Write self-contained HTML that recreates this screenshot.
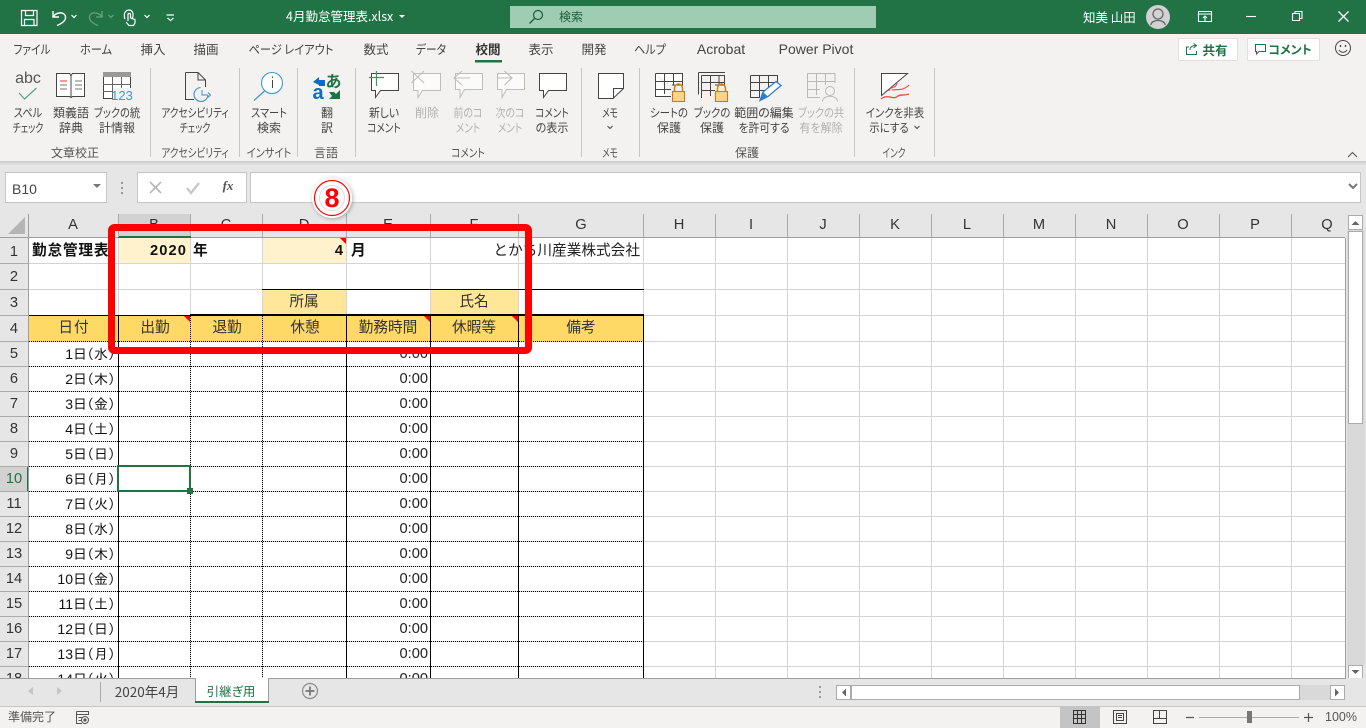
<!DOCTYPE html>
<html lang="ja"><head><meta charset="utf-8"><title>4月勤怠管理表.xlsx</title>
<style>
html,body{margin:0;padding:0;width:1366px;height:728px;overflow:hidden;background:#fff}
body{position:relative;font-family:"Liberation Sans","Noto Sans CJK JP",sans-serif}
svg.l{position:absolute;left:0;top:0}
.t,.c,.r{position:absolute;white-space:nowrap;line-height:16px;font-size:12px;color:#444;font-family:"Noto Sans CJK JP",sans-serif;font-feature-settings:"palt"}
.c{transform:translateX(-50%) scaleX(var(--s,1))}
.d{color:#b1b1b1}
.tab{font-size:12.5px;top:41px}
.g{font-size:12px;top:145px;color:#555}
.ch{font-family:"Liberation Sans",sans-serif;font-size:14.67px;top:217px;color:#333;font-feature-settings:normal}
.rh{font-family:"Liberation Sans",sans-serif;font-size:14.67px;left:14px;color:#333;font-feature-settings:normal}
.cell{font-size:14.67px;color:#111;font-feature-settings:normal;font-family:"Liberation Sans","Noto Sans CJK JP",sans-serif}
.r{transform:translateX(-100%)}
.dt{font-family:"Liberation Sans","IPAGothic",sans-serif;font-size:14px;color:#111;left:115px;font-feature-settings:normal}
.dt i{font-style:normal;font-family:"IPAGothic",sans-serif}
.tm{font-family:"Liberation Sans",sans-serif;font-size:14.67px;color:#222;left:428px;font-feature-settings:normal}
</style></head><body>
<svg class="l" width="1366" height="728" viewBox="0 0 1366 728" fill="none">
<!-- backgrounds -->
<rect width="1366" height="34" fill="#217346"/>
<rect x="510" y="6" width="366" height="22" fill="#9fcdb3"/>
<rect y="34" width="1366" height="127" fill="#f3f2f1"/>
<rect y="161" width="1366" height="53" fill="#e6e6e6"/>
<rect y="161" width="1366" height="2" fill="#cfcfcf"/><rect y="163" width="1366" height="2" fill="#dedede"/>
<rect y="214" width="1346" height="24" fill="#e6e6e6"/>
<rect y="238" width="29" height="441" fill="#e6e6e6"/>
<rect x="1346" y="214" width="20" height="465" fill="#e6e6e6"/>
<!-- formula bar -->
<rect x="5.500" y="172.500" width="101" height="30" fill="#fff" stroke="#c6c6c6"/>
<rect x="137.500" y="172.500" width="109" height="30" fill="#fff" stroke="#c6c6c6"/>
<rect x="250.500" y="172.500" width="1110" height="30" fill="#fff" stroke="#c6c6c6"/>
<path d="M93 184h8l-4 4z" fill="#777"/>
<path d="M122 182v2M122 187v2M122 192v2" stroke="#999" stroke-width="2"/>
<path d="M150 182l11 11M161 182l-11 11" stroke="#b8b8b8" stroke-width="1.600"/>
<path d="M187 188l4 5 8-10" stroke="#c8c8c8" stroke-width="2.400"/>
<path d="M1349 184l4 4 4-4" stroke="#777" stroke-width="2"/>
<path d="M8 234L25 217V234z" fill="#b4b4b4"/>
<!-- grid fills -->
<rect x="119" y="214" width="72" height="22" fill="#d2d2d2"/>
<rect x="118" y="236" width="73" height="2" fill="#217346"/>
<rect y="466" width="27" height="25" fill="#d2d2d2"/>
<rect x="27" y="466" width="2" height="25" fill="#217346"/>
<rect x="119" y="238" width="71" height="25" fill="#fff2cc"/>
<rect x="263" y="238" width="83" height="25" fill="#fff2cc"/>
<rect x="263" y="290" width="83" height="25" fill="#ffe699"/>
<rect x="431" y="290" width="87" height="25" fill="#ffe699"/>
<rect x="29" y="316" width="614" height="25" fill="#ffd966"/>
<!-- light grid -->
<path stroke="#d4d4d4" d="M118.500 238V678M190.500 238V678M262.500 238V678M346.500 238V678M430.500 238V678M518.500 238V678M643.500 238V678M715.500 238V678M787.500 238V678M859.500 238V678M931.500 238V678M1003.500 238V678M1075.500 238V678M1147.500 238V678M1219.500 238V678M1291.500 238V678
M29 263.500H1345M29 289.500H1345M29 315.500H1345M29 341.500H1345M29 366.500H1345M29 391.500H1345M29 416.500H1345M29 441.500H1345M29 466.500H1345M29 491.500H1345M29 516.500H1345M29 541.500H1345M29 566.500H1345M29 591.500H1345M29 616.500H1345M29 641.500H1345M29 666.500H1345"/>
<!-- header separators -->
<path stroke="#ababab" d="M118.500 214V237M190.500 214V236M262.500 214V237M346.500 214V237M430.500 214V237M518.500 214V237M643.500 214V237M715.500 214V237M787.500 214V237M859.500 214V237M931.500 214V237M1003.500 214V237M1075.500 214V237M1147.500 214V237M1219.500 214V237M1291.500 214V237
M0 263.500H28M0 289.500H28M0 315.500H28M0 341.500H28M0 366.500H28M0 391.500H28M0 416.500H28M0 441.500H28M0 466.500H28M0 491.500H28M0 516.500H28M0 541.500H28M0 566.500H28M0 591.500H28M0 616.500H28M0 641.500H28M0 666.500H28"/>
<path stroke="#9e9e9e" d="M28.500 214V678M0 237.500H118M191 237.500H1345M1345.500 238V678"/>
<!-- black borders -->
<path stroke="#000" d="M262 289.500H644M190 314.500H644M29 315.500H644M118.500 315V679M346.500 315V679M430.500 315V679M518.500 315V679M643.500 315V679"/>
<path stroke="#000" stroke-dasharray="1 1" d="M29 341.500H644M29 366.500H644M29 391.500H644M29 416.500H644M29 441.500H644M29 466.500H644M29 491.500H644M29 516.500H644M29 541.500H644M29 566.500H644M29 591.500H644M29 616.500H644M29 641.500H644M29 666.500H644M190.500 316V679M262.500 316V679"/>
<!-- comment marks -->
<path d="M184 316h6v6zM340 238h6v6zM424 316h6v6zM512 316h6v6z" fill="#f00"/>
<!-- selection -->
<rect x="118" y="466" width="72" height="25" stroke="#217346" stroke-width="2"/>
<rect x="187" y="488" width="6" height="6" fill="#217346"/>

<!-- title bar icons -->
<g stroke="#fff" stroke-width="1.200">
<path d="M21.500 10.500H37V25.500H21.500ZM25.500 10.500V15.500H33.500V10.500M24.500 25.500V19.500H34V25.500"/>
<path d="M53 11V17H59M53 17C56 12 65 11 65.500 17C66 21 61 24 57 25.500" stroke-width="1.400"/>
<path d="M125 19C122.500 12 127 10 129 10C132 10 134 13 132.500 18M128 21V14.500C128 13 130.500 13 130.500 14.500V18L135 19.500V23L133.500 25.500H129L126 22" stroke-width="1.200"/>
<path d="M166.500 15H174M167.500 18L170.500 20.500L173.500 18"/>
<path d="M71.500 15l2.500 2.500l2.500-2.500M144.500 15l2.500 2.500l2.500-2.500"/>
</g>
<g stroke="#6a9f82" stroke-width="1.300"><path d="M102 11V17H96M102 17C99 12 90 11 89.500 17C89 21 94 24 98 25.500"/><path d="M108.500 15l2.500 2.500l2.500-2.500"/></g>
<path d="M399 15h6l-3 3z" fill="#fff"/>
<circle cx="538" cy="15" r="4.500" stroke="#1e5c3a" stroke-width="1.200"/><path d="M534.500 18.500L529.500 23.500" stroke="#1e5c3a" stroke-width="1.300"/>
<circle cx="1158" cy="17" r="12" fill="#d2d2d2"/>
<circle cx="1158" cy="14" r="5" stroke="#666" stroke-width="1.300"/><path d="M1151 25C1151 19 1165 19 1165 25" stroke="#666" stroke-width="1.300"/>
<g stroke="#fff" stroke-width="1.100">
<path d="M1198.500 11.500H1211.500V21.500H1198.500ZM1198.500 14H1211.500M1205 21V16M1203 18L1205 16L1207 18"/>
<path d="M1246 16.500H1256"/>
<path d="M1292.500 13.500H1299.500V20.500H1292.500ZM1295 13V11.500H1302V18.500H1300"/>
<path d="M1338.500 11.500L1348.500 21.500M1348.500 11.500L1338.500 21.500" stroke-width="1.300"/>
</g>
<path d="M475 60h27v2.500h-27z" fill="#217346"/>
<!-- right buttons -->
<rect x="1178.500" y="38.500" width="59" height="22" rx="1" fill="#fff" stroke="#e1dfdd"/>
<rect x="1247.500" y="38.500" width="72" height="22" rx="1" fill="#fff" stroke="#e1dfdd"/>
<path d="M1189 47H1186.500V54.500H1196.500V51M1190 50C1190 46.500 1193 45.500 1196 45.500M1193.500 43.500L1196.500 45.500L1193.500 48" stroke="#217346" stroke-width="1"/>
<path d="M1255.500 44.500H1265.500V51.500H1259L1256.500 54V51.500H1255.500Z" stroke="#217346"/>
<circle cx="1343" cy="48" r="7.500" stroke="#444" stroke-width="1"/><path d="M1339 50C1341 53 1345 53 1347 50" stroke="#444"/><path d="M1340.500 45v2M1345.500 45v2" stroke="#444" stroke-width="1.300"/>
<path d="M1348 157l4.500-4.500 4.500 4.500" stroke="#555" stroke-width="1.100"/>
<!-- ribbon separators -->
<path stroke="#c8c6c4" d="M150.500 68V157M239.500 68V157M297.500 68V157M355.500 68V157M581.500 68V157M639.500 68V157M854.500 68V157M934.500 68V157"/>
<!-- ribbon icons -->
<path d="M19 93l5.500 6 12-11" stroke="#5aa67f" stroke-width="1.200"/>
<!-- thesaurus -->
<path d="M56.500 73.500H69.500C70 74 71 75 71 76C71 75 72 74 72.500 73.500H84.500V96.500H72.500L71 97.500L69.500 96.500H56.500ZM71 76V97" stroke="#444" fill="#fff"/>
<path d="M60 81h7" stroke="#e8323c"/><path d="M60 85h7M60 89h7M75 81h7M75 85h7M75 89h7" stroke="#777"/>
<!-- stats -->
<rect x="103.500" y="72.500" width="27" height="26" fill="#fff" stroke="#444"/><rect x="103" y="72" width="28" height="5" fill="#999"/>
<path d="M112.500 77V99M121.500 77V90M103 84.500H131M103 91.500H113" stroke="#666"/>
<rect x="113" y="88" width="19" height="12" fill="#f3f2f1"/>
<!-- accessibility -->
<path d="M185.500 72.500H198L205.500 80V87M198 72.500V80H205.500M185.500 72.500V99.500H194" stroke="#444" fill="none"/>
<path d="M200.500 87.500A7 7 0 1 0 208 95" stroke="#3a8fd6" stroke-width="1.100"/><path d="M202 90V95H208M208 92.500L210.500 95L208 97.500" stroke="#3a8fd6"/>
<!-- smart lookup -->
<circle cx="272" cy="83" r="10.500" stroke="#3a9ad9" stroke-width="1.100" fill="#fff"/><path d="M265 90.500L254 100.500" stroke="#3a9ad9" stroke-width="1.300"/><path d="M272.500 80V88" stroke="#444"/><path d="M272.500 76.500v1.500" stroke="#444"/>
<!-- translate -->
<path d="M313 82l6-5v3h6v6h-6v-1z" fill="#0f6cbd"/>
<path d="M340 90V99H329L332 96L329 92H334L336 94Z" fill="#217346"/>
<!-- comments -->
<path d="M371.500 73.500H398.500V90.500H380.500L375.500 97.500V90.500H371.500Z" fill="#fff" stroke="#444"/>
<path d="M369 77.500H384M376.500 71V86" stroke="#2da05f" stroke-width="1.200"/>
<g stroke="#bdbdbd"><path d="M413.500 73.500H440.500V90.500H422.500L418 97.500V90.500H413.500Z" fill="#fbfbfb"/><path d="M411.500 71L424 83M424 71L411.500 83" stroke-width="1.100"/>
<path d="M455.500 73.500H482.500V89.500H464.500L460 97.500V89.500H455.500Z" fill="#fbfbfb"/><path d="M462 71L454 78L462 85M454 78H470" stroke-width="1.100"/>
<path d="M497.500 73.500H524.500V89.500H506.500L502 97.500V89.500H497.500Z" fill="#fbfbfb"/><path d="M497 78H511.500M504.500 71L512 78L504.500 85" stroke-width="1.100"/></g>
<path d="M539.500 73.500H566.500V90.500H548.500L543.500 97.500V90.500H539.500Z" fill="#fff" stroke="#444"/>
<!-- memo -->
<path d="M598.500 73.500H623.500V88.500L613 98.500H598.500Z" fill="#fff" stroke="#444"/><path d="M623.500 88.500H613.500V98.500" stroke="#444"/>
<!-- protect -->
<g stroke="#444"><path d="M655.500 73.500H682.500V85H672M655.500 73.500V96.500H671M664.500 73.500V94M673.500 73.500V85M655.500 81.500H682.500M655.500 89.500H671" fill="#fff"/>
<path d="M698.500 72.500H725M701.500 75.500H724.500V85H715M701.500 75.500V98M698.500 72.500V94.500M710.500 75.500V96M719 75.500V85M701.500 82.500H724.500M701.500 90.500H715"/>
<path d="M750.500 75.500H777.500V83M750.500 75.500V97.500H760M759.500 75.500V97M768.500 75.500V92M750.500 82.500H777.500M750.500 90.500H768"/></g>
<g fill="#fbd68a" stroke="#d9730d" stroke-width="1.100"><rect x="672.500" y="91.500" width="12" height="10"/><rect x="715.500" y="91.500" width="12" height="10"/></g>
<path d="M674.500 91v-2.500a4 4.500 0 0 1 8 0V91M717.500 91v-2.500a4 4.500 0 0 1 8 0V91" stroke="#e07b00" stroke-width="1.500"/>
<path d="M760 100.500L763 92L776 81.500L781 85.500L768 96.500Z" fill="#fff" stroke="#2f7fd0" stroke-width="1.300"/><path d="M760 100.500L763 92L768 96.500Z" fill="#2f7fd0"/>
<g stroke="#b8b8b8"><path d="M807.500 73.500H835V83M807.500 73.500V97.500H820M816.500 73.500V95M825.500 73.500V85M807.500 81.500H835M807.500 89.500H820"/><circle cx="830" cy="91" r="4.500" fill="#f3f2f1"/><path d="M822.500 101.500C822.500 94.500 837.500 94.500 837.500 101.500" fill="#f3f2f1"/></g>
<!-- ink -->
<path d="M881.500 73.500H907.500L881.500 95.500Z" fill="#fff" stroke="#444"/>
<path d="M897 83C896 89 890 86 889 91M892 90C899 89 903 91 909 85" stroke="#f05050" stroke-width="1.200"/><path d="M881 99C889 93 892 101 898 96C901 94 903 96 909 94" stroke="#f05050" stroke-width="1.400"/>
<!-- small chevrons -->
<path d="M607.500 126l2.500 2.500 2.500-2.500M914.500 126l2.500 2.500 2.500-2.500" stroke="#444"/>
<!-- scrollbars -->
<rect x="1347" y="230" width="18" height="435" fill="#d9d9d9"/>
<rect x="1348.500" y="215.500" width="14" height="14" fill="#fff" stroke="#ababab"/>
<path d="M1351.500 225h8l-4-4z" fill="#666"/>
<rect x="1348.500" y="231.500" width="14" height="192" fill="#fff" stroke="#ababab"/>
<rect x="1348.500" y="665.500" width="14" height="14" fill="#fff" stroke="#ababab"/>
<path d="M1351.500 670h8l-4 4z" fill="#666"/>
<!-- tab bar -->
<rect y="678" width="1366" height="28" fill="#e6e6e6"/>
<path stroke="#9e9e9e" d="M0 678.500H195M269 678.500H1346"/>
<rect y="706" width="1366" height="22" fill="#f3f2f1"/>
<path stroke="#c6c6c6" d="M0 706.500H1366"/>
<path d="M33 687v8l-5-4zM57 687v8l5-4z" fill="#c4c4c4"/>
<path stroke="#aaa" d="M100.500 682V702"/>
<path d="M195.500 678V702M268.500 678V702" stroke="#9e9e9e"/>
<rect x="196" y="678" width="72" height="24" fill="#fff"/>
<rect x="195" y="701" width="74" height="2" fill="#217346"/>
<circle cx="310" cy="691" r="7.500" stroke="#8a8a8a" stroke-width="1.200"/><path d="M305.500 691H314.500M310 686.500V695.500" stroke="#777" stroke-width="1.800"/>
<path d="M820 686v2M820 691v2M820 696v2" stroke="#999" stroke-width="2"/>
<rect x="836" y="685" width="509" height="15" fill="#d9d9d9"/>
<rect x="836.500" y="685.500" width="14" height="14" fill="#fff" stroke="#ababab"/>
<path d="M846 688.500v8l-4-4z" fill="#666"/>
<rect x="851.500" y="685.500" width="448" height="14" fill="#fff" stroke="#ababab"/>
<rect x="1330.500" y="685.500" width="14" height="14" fill="#fff" stroke="#ababab"/>
<path d="M1335 688.500v8l4-4z" fill="#666"/>
<!-- status -->
<path d="M76.500 711.500H88.500V715M76.500 711.500V723.500H82M76.500 714.500H88.500M78.500 717.500H82M78.500 720.500H82" stroke="#555"/><circle cx="85" cy="720" r="3.500" stroke="#555"/><circle cx="85" cy="720" r="1.600" fill="#555"/>
<rect x="1060" y="707" width="40" height="21" fill="#c4c4c4"/>
<path d="M1073.500 710.500H1085.500V723.500H1073.500ZM1077.500 710.500V723.500M1081.500 710.500V723.500M1073.500 714.500H1085.500M1073.500 718.500H1085.500" stroke="#333"/>
<path d="M1113.500 710.500H1126.500V723.500H1113.500ZM1116.500 713.500H1123.500V720.500H1116.500ZM1118 715.500H1122M1118 717.500H1122" stroke="#444"/>
<path d="M1153.500 710.500H1166.500V723.500H1153.500ZM1153.500 718.500H1159.500V710.500M1159.500 718.500H1166.500" stroke="#444"/>
<path d="M1186 717.500H1194M1304 717.500H1313M1308.500 713V722" stroke="#555" stroke-width="1.200"/>
<path d="M1199 717.500H1299" stroke="#aaa"/>
<rect x="1247" y="711" width="5" height="12" fill="#777"/>
</svg>

<!-- title text -->
<div class="t" style="left:286px;top:8px;font-size:12.5px;color:#fff">4月勤怠管理表.xlsx</div>
<div class="t" style="left:559px;top:9px;color:#1e5c3a">検索</div>
<div class="t" style="left:1083px;top:9px;color:#fff;font-size:12.5px">知美 山田</div>
<!-- tabs -->
<div class="c tab" style="left:32px;--s:.86">ファイル</div>
<div class="c tab" style="left:96px;--s:.9">ホーム</div>
<div class="c tab" style="left:153px">挿入</div>
<div class="c tab" style="left:206px">描画</div>
<div class="c tab" style="left:291px;--s:.9">ページ レイアウト</div>
<div class="c tab" style="left:376px">数式</div>
<div class="c tab" style="left:431px;--s:.87">データ</div>
<div class="c tab" style="left:488px;font-weight:700;color:#333">校閲</div>
<div class="c tab" style="left:541px">表示</div>
<div class="c tab" style="left:594px">開発</div>
<div class="c tab" style="left:650px;--s:.89">ヘルプ</div>
<div class="c tab" style="left:721px;font-family:'Liberation Sans',sans-serif;font-size:14px">Acrobat</div>
<div class="c tab" style="left:816px;font-family:'Liberation Sans',sans-serif;font-size:14px">Power Pivot</div>
<div class="c" style="left:1215px;top:42px;font-weight:700;color:#217346;font-size:12.5px">共有</div>
<div class="c" style="left:1290px;top:42px;font-weight:700;color:#217346;font-size:12px">コメント</div>
<!-- ribbon icon glyphs -->
<div class="c" style="left:28px;top:71px;font-size:16px;font-family:'Liberation Sans',sans-serif;color:#555">abc</div>
<div class="c" style="left:122px;top:88px;font-size:13px;font-family:'Liberation Sans',sans-serif;color:#3a9ad9">123</div>
<div class="c" style="left:333.500px;top:72px;font-size:16px;font-weight:700;color:#217346">あ</div>
<div class="c" style="left:318px;top:85px;font-size:20px;font-weight:700;font-family:'Liberation Sans',sans-serif;color:#0f6cbd">a</div>
<!-- ribbon labels -->
<div class="c" style="left:28px;top:105px;--s:.85">スペル</div><div class="c" style="left:28px;top:120px;--s:.75">チェック</div>
<div class="c" style="left:71px;top:105px">類義語</div><div class="c" style="left:71px;top:120px">辞典</div>
<div class="c" style="left:117px;top:105px;--s:.85">ブックの統</div><div class="c" style="left:117px;top:120px">計情報</div>
<div class="c" style="left:195px;top:105px;--s:.8">アクセシビリティ</div><div class="c" style="left:195px;top:120px;--s:.75">チェック</div>
<div class="c" style="left:269px;top:105px;--s:.85">スマート</div><div class="c" style="left:269px;top:120px">検索</div>
<div class="c" style="left:327px;top:105px">翻</div><div class="c" style="left:327px;top:120px">訳</div>
<div class="c" style="left:384px;top:105px;--s:.9">新しい</div><div class="c" style="left:384px;top:120px;--s:.8">コメント</div>
<div class="c d" style="left:427px;top:105px">削除</div>
<div class="c d" style="left:468px;top:105px;--s:.83">前のコ</div><div class="c d" style="left:468px;top:120px;--s:.8">メント</div>
<div class="c d" style="left:510px;top:105px;--s:.83">次のコ</div><div class="c d" style="left:510px;top:120px;--s:.8">メント</div>
<div class="c" style="left:552px;top:105px;--s:.8">コメント</div><div class="c" style="left:552px;top:120px;--s:.92">の表示</div>
<div class="c" style="left:610px;top:105px;--s:.72">メモ</div>
<div class="c" style="left:669px;top:105px;--s:.87">シートの</div><div class="c" style="left:669px;top:120px">保護</div>
<div class="c" style="left:712px;top:105px;--s:.87">ブックの</div><div class="c" style="left:712px;top:120px">保護</div>
<div class="c" style="left:764px;top:105px">範囲の編集</div><div class="c" style="left:764px;top:120px;--s:.9">を許可する</div>
<div class="c d" style="left:821px;top:105px;--s:.85">ブックの共</div><div class="c d" style="left:821px;top:120px;--s:.92">有を解除</div>
<div class="c" style="left:895px;top:105px;--s:.87">インクを非表</div><div class="c" style="left:889px;top:120px;--s:.87">示にする</div>
<div class="c g" style="left:75px">文章校正</div>
<div class="c g" style="left:195px;--s:.8">アクセシビリティ</div>
<div class="c g" style="left:269px;--s:.85">インサイト</div>
<div class="c g" style="left:326px">言語</div>
<div class="c g" style="left:468px;--s:.8">コメント</div>
<div class="c g" style="left:610px;--s:.72">メモ</div>
<div class="c g" style="left:747px">保護</div>
<div class="c g" style="left:894px;--s:.72">インク</div>
<!-- formula bar -->
<div class="t" style="left:12px;top:181px;font-family:'Liberation Sans',sans-serif;font-size:14px;color:#444">B10</div>
<div class="c" style="left:228px;top:178px;font-family:'Liberation Serif',serif;font-style:italic;font-weight:700;font-size:13px;color:#555">fx</div>
<!-- column headers -->
<div class="c ch" style="left:73px">A</div><div class="c ch" style="left:154px">B</div><div class="c ch" style="left:226px">C</div><div class="c ch" style="left:304px">D</div><div class="c ch" style="left:388px">E</div><div class="c ch" style="left:474px">F</div><div class="c ch" style="left:581px">G</div><div class="c ch" style="left:679px">H</div><div class="c ch" style="left:751px">I</div><div class="c ch" style="left:823px">J</div><div class="c ch" style="left:895px">K</div><div class="c ch" style="left:967px">L</div><div class="c ch" style="left:1039px">M</div><div class="c ch" style="left:1111px">N</div><div class="c ch" style="left:1183px">O</div><div class="c ch" style="left:1255px">P</div><div class="c ch" style="left:1327px">Q</div>
<!-- row headers -->
<div class="c rh" style="top:244px">1</div><div class="c rh" style="top:269px">2</div><div class="c rh" style="top:295px">3</div><div class="c rh" style="top:321px">4</div><div class="c rh" style="top:346px">5</div><div class="c rh" style="top:371px">6</div><div class="c rh" style="top:396px">7</div><div class="c rh" style="top:421px">8</div><div class="c rh" style="top:446px">9</div><div class="c rh" style="top:471px;color:#217346">10</div><div class="c rh" style="top:496px">11</div><div class="c rh" style="top:521px">12</div><div class="c rh" style="top:546px">13</div><div class="c rh" style="top:571px">14</div><div class="c rh" style="top:596px">15</div><div class="c rh" style="top:621px">16</div><div class="c rh" style="top:646px">17</div>
<!-- cells -->
<div class="t cell" style="left:32px;top:243px;font-weight:700;letter-spacing:.8px">勤怠管理表</div>
<div class="r cell" style="left:187px;top:243px;font-weight:700;letter-spacing:1.100px">2020</div>
<div class="t cell" style="left:193px;top:243px;font-weight:700">年</div>
<div class="r cell" style="left:343px;top:243px;font-weight:700">4</div>
<div class="t cell" style="left:351px;top:243px;font-weight:700">月</div>
<div class="r cell" style="left:640px;top:243px;color:#222">とかち川産業株式会社</div>
<div class="c cell" style="left:304px;top:294px;color:#333">所属</div>
<div class="c cell" style="left:474px;top:294px;color:#333">氏名</div>
<div class="c cell" style="left:74px;top:320px;color:#333;letter-spacing:1px">日付</div>
<div class="c cell" style="left:155px;top:320px;color:#333">出勤</div>
<div class="c cell" style="left:227px;top:320px;color:#333">退勤</div>
<div class="c cell" style="left:305px;top:320px;color:#333">休憩</div>
<div class="c cell" style="left:388px;top:320px;color:#333">勤務時間</div>
<div class="c cell" style="left:474px;top:320px;color:#333">休暇等</div>
<div class="c cell" style="left:581px;top:320px;color:#333">備考</div>
<!-- dates -->
<div class="r dt" style="top:346px">1日<i>(</i>水<i>)</i></div><div class="r tm" style="top:346px">0:00</div>
<div class="r dt" style="top:371px">2日<i>(</i>木<i>)</i></div><div class="r tm" style="top:371px">0:00</div>
<div class="r dt" style="top:396px">3日<i>(</i>金<i>)</i></div><div class="r tm" style="top:396px">0:00</div>
<div class="r dt" style="top:421px">4日<i>(</i>土<i>)</i></div><div class="r tm" style="top:421px">0:00</div>
<div class="r dt" style="top:446px">5日<i>(</i>日<i>)</i></div><div class="r tm" style="top:446px">0:00</div>
<div class="r dt" style="top:471px">6日<i>(</i>月<i>)</i></div><div class="r tm" style="top:471px">0:00</div>
<div class="r dt" style="top:496px">7日<i>(</i>火<i>)</i></div><div class="r tm" style="top:496px">0:00</div>
<div class="r dt" style="top:521px">8日<i>(</i>水<i>)</i></div><div class="r tm" style="top:521px">0:00</div>
<div class="r dt" style="top:546px">9日<i>(</i>木<i>)</i></div><div class="r tm" style="top:546px">0:00</div>
<div class="r dt" style="top:571px">10日<i>(</i>金<i>)</i></div><div class="r tm" style="top:571px">0:00</div>
<div class="r dt" style="top:596px">11日<i>(</i>土<i>)</i></div><div class="r tm" style="top:596px">0:00</div>
<div class="r dt" style="top:621px">12日<i>(</i>日<i>)</i></div><div class="r tm" style="top:621px">0:00</div>
<div class="r dt" style="top:646px">13日<i>(</i>月<i>)</i></div><div class="r tm" style="top:646px">0:00</div>
<!-- clipped row 18 -->
<div style="position:absolute;left:0;top:668px;width:1366px;height:10px;overflow:hidden">
<div class="c rh" style="top:3px">18</div>
<div class="r dt" style="top:3px">14日<i>(</i>火<i>)</i></div><div class="r tm" style="top:3px">0:00</div>
</div>
<!-- tab text -->
<div class="c" style="left:147px;top:683px;font-size:13.500px;color:#444;font-feature-settings:normal">2020年4月</div>
<div class="c" style="left:231px;top:683px;font-size:12.500px;color:#217346">引継ぎ用</div>
<div class="t" style="left:8px;top:709px;font-size:12px;color:#555;font-feature-settings:normal">準備完了</div>
<div class="t" style="left:1325px;top:709px;font-size:12.500px;font-family:'Liberation Sans',sans-serif;color:#555">100%</div>
<!-- overlay -->
<svg class="l" width="1366" height="728" viewBox="0 0 1366 728" fill="none">
<rect x="111.500" y="227.500" width="417" height="123" rx="3" stroke="#f00" stroke-width="7"/>
<defs><filter id="s" x="-30%" y="-30%" width="160%" height="160%"><feDropShadow dx="1" dy="1" stdDeviation="2" flood-color="#000" flood-opacity=".3"/></filter></defs>
<circle cx="332" cy="198" r="20" fill="#fff" filter="url(#s)"/>
<circle cx="332" cy="198" r="17.500" stroke="#f00" stroke-width="1.200" fill="#fff"/>
<circle cx="332" cy="198" r="12.500" stroke="#ddd" stroke-width="1"/>
</svg>
<div class="c" style="left:332px;top:184px;line-height:28px;font-family:'Liberation Sans',sans-serif;font-weight:700;font-size:27px;color:#f00;font-feature-settings:normal">8</div>
</body></html>
